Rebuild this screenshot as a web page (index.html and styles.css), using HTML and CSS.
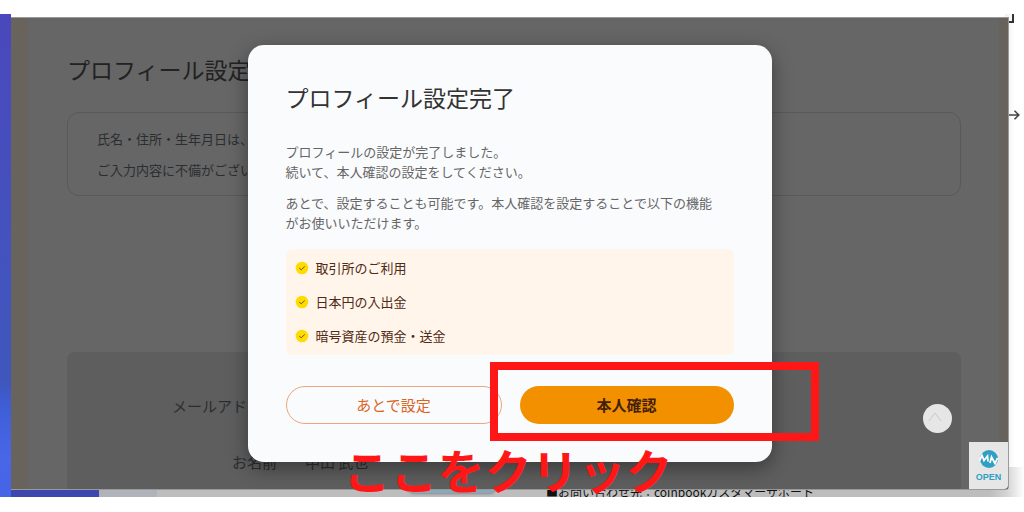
FILE: index.html
```html
<!DOCTYPE html>
<html lang="ja">
<head>
  <meta charset="UTF-8">
  <meta name="viewport" content="width=device-width, initial-scale=1.0">
  <title>プロフィール設定</title>
  <link rel="stylesheet" href="styles.css">
</head>
<body>
  <div class="desktop">
    <!-- window behind -->
    <div class="back-window">
      <div class="back-sidebar"></div>
      <div class="back-content">
        <span class="back-button"></span>
        <p class="contact">■お問い合わせ先：coinbookカスタマーサポート</p>
      </div>
      <svg class="edge-corner" width="6" height="10" viewBox="0 0 6 10"><path d="M0 8H4V0" fill="none" stroke="#333" stroke-width="2"/></svg>
      <svg class="edge-arrow" width="11" height="10" viewBox="0 0 11 10"><path d="M0 5H10M5.500 0.800L9.800 5L5.500 9.200" fill="none" stroke="#444" stroke-width="1.600"/></svg>
    </div>

    <div class="window">
      <main class="page">
        <h1>プロフィール設定</h1>
        <div class="notice">
          <p>氏名・住所・生年月日は、</p>
          <p>ご入力内容に不備がござい</p>
        </div>
        <dl class="profile">
          <dt>メールアドレス</dt>
          <dd></dd>
          <dt>お名前</dt>
          <dd>中山 武也</dd>
        </dl>
      </main>

      <button class="to-top" type="button" aria-label="ページの先頭へ">
        <svg width="14" height="10" viewBox="0 0 14 10"><path d="M1 9L7 1L13 9" fill="none" stroke="#c9c9c9" stroke-width="1"/></svg>
      </button>
      <a class="open-badge" href="#">
        <svg width="20" height="18" viewBox="0 0 20 18">
          <ellipse cx="10" cy="9" rx="9" ry="9" fill="#2f9fc4"/>
          <path d="M0.500 10.500L3 5.500L5 10.500L8.500 6L9 11.500M11 13L12.500 7L16 13.500L18.500 8" fill="none" stroke="#fff" stroke-width="1.800"/>
        </svg>
        <span>OPEN</span>
      </a>

      <div class="overlay">
        <div class="modal" role="dialog" aria-labelledby="modal-title">
          <h2 id="modal-title">プロフィール設定完了</h2>
          <p>プロフィールの設定が完了しました。<br>続いて、本人確認の設定をしてください。</p>
          <p>あとで、設定することも可能です。本人確認を設定することで以下の機能<br>がお使いいただけます。</p>
          <ul class="features">
            <li><svg class="check" viewBox="0 0 14 14"><circle cx="7" cy="7" r="6.300" fill="#ffdc00"/><path d="M4.200 7L6.200 8.800L9.800 5.400" fill="none" stroke="#6b5a10" stroke-width="1"/></svg>取引所のご利用</li>
            <li><svg class="check" viewBox="0 0 14 14"><circle cx="7" cy="7" r="6.300" fill="#ffdc00"/><path d="M4.200 7L6.200 8.800L9.800 5.400" fill="none" stroke="#6b5a10" stroke-width="1"/></svg>日本円の入出金</li>
            <li><svg class="check" viewBox="0 0 14 14"><circle cx="7" cy="7" r="6.300" fill="#ffdc00"/><path d="M4.200 7L6.200 8.800L9.800 5.400" fill="none" stroke="#6b5a10" stroke-width="1"/></svg>暗号資産の預金・送金</li>
          </ul>
          <div class="actions">
            <button class="btn btn-later" type="button">あとで設定</button>
            <button class="btn btn-verify" type="button">本人確認</button>
          </div>
          <div class="callout-box"></div>
          <div class="callout-text">ここをクリック</div>
        </div>
      </div>
    </div>
  </div>
</body>
</html>
```

FILE: styles.css
```css
* {
  box-sizing: border-box;
}
body {
  margin: 0;
  padding: 14px 0 15px;
  height: 100vh;
  background: #fff;
  font-family: "Noto Sans CJK JP", sans-serif;
  font-size: 13px;
  overflow: hidden;
}
h1, h2, p, ul, dl, dd {
  margin: 0;
  padding: 0;
}
.desktop {
  position: relative;
  height: 100%;
  padding: 3px 15px 7px 11px;
  background: linear-gradient(#4a48bc 0%, #4452bd 45%, #3f57bd 76%, #3f5fd8 82%, #4a66e8 92%, #4564e6 100%);
}
.desktop::before {
  content: "";
  position: absolute;
  left: 11px;
  bottom: 0;
  width: 88px;
  height: 7px;
  background: #3c48ae;
}
.desktop::after {
  content: "";
  position: absolute;
  top: 0;
  left: 11px;
  width: 88px;
  height: 3px;
  background: #fff;
}

/* window behind */
.back-window {
  position: absolute;
  top: 0;
  right: 0;
  bottom: 0;
  left: 99px;
  display: flex;
  align-items: flex-end;
  overflow: hidden;
  background: linear-gradient(to right, #fff 98%, #f0f0f0 98%, #fff 99%);
}
.back-sidebar {
  width: 58px;
  height: 30px;
  background: #b0b3b9;
}
.back-content {
  position: relative;
  flex: 1;
  height: 30px;
  background: linear-gradient(to right, #bdbdbd 96%, #d4d4d4 98%, #fff 100%);
}
.back-button {
  position: absolute;
  left: 250px;
  bottom: 4px;
  width: 90px;
  height: 20px;
  border-radius: 8px;
  background: #86a9bd;
  box-shadow: 0 1px 3px #888;
}
.contact {
  position: absolute;
  left: 389px;
  bottom: -4px;
  font-size: 12px;
  line-height: 18px;
  white-space: nowrap;
  color: #111;
}
.edge-corner {
  position: absolute;
  top: 0;
  right: 9px;
}
.edge-arrow {
  position: absolute;
  top: 96px;
  right: 4px;
}

/* front window */
.window {
  position: relative;
  height: 100%;
  border: 1px solid #999;
  border-left: 0;
  border-radius: 0 0 4px 0;
  background: #666;
}
.page {
  height: 100%;
  padding: 35px 38px 0 39px;
  border-left: 17px solid #68645d;
  border-right: 9px solid #68625d;
  overflow: hidden;
  color: #2b2e31;
}
h1 {
  font-size: 23px;
  font-weight: 400;
  line-height: 32px;
  color: #222;
}
.notice {
  margin-top: 27px;
  padding: 10px 29px;
  border: 1px solid #595959;
  border-radius: 12px;
  line-height: 31px;
}
.profile {
  display: grid;
  grid-template-columns: 210px 1fr;
  column-gap: 28px;
  margin-top: 156px;
  padding: 26px 0;
  border-radius: 8px;
  background: #5e5e5e;
  font-size: 15px;
  line-height: 56px;
}
.profile dt {
  text-align: right;
}
.to-top {
  position: absolute;
  right: 56px;
  bottom: 56px;
  width: 29px;
  height: 29px;
  padding: 0 5px 2px 0;
  border: 0;
  border-radius: 50%;
  background: #e6e6e6;
}
.open-badge {
  position: absolute;
  right: 0;
  bottom: 0;
  width: 39px;
  height: 47px;
  padding-top: 8px;
  border-radius: 0 0 4px 0;
  background: #e6e6e6;
  color: #2f9fc4;
  font-family: "Liberation Sans Narrow", "Liberation Sans", sans-serif;
  font-size: 9px;
  font-weight: 700;
  line-height: 18px;
  text-align: center;
  text-decoration: none;
}
.open-badge svg, .open-badge span {
  display: block;
  margin: 0 auto;
}

/* modal */
.overlay {
  position: absolute;
  inset: 0;
  display: flex;
  align-items: center;
  justify-content: center;
}
.modal {
  position: relative;
  width: 524px;
  padding: 36px 38px 38px;
  border-radius: 16px;
  background: #fafbfd;
  box-shadow: 0 6px 20px rgba(0, 0, 0, 0.4);
  color: #666;
  line-height: 20px;
}
.modal h2 {
  margin-bottom: 29px;
  font-size: 23px;
  font-weight: 400;
  line-height: 32px;
  color: #333;
}
.modal p {
  margin-bottom: 11px;
  white-space: nowrap;
}
.features {
  margin-top: 16px;
  padding: 2px 9px;
  border-radius: 6px;
  background: #fff5ea;
  list-style: none;
  color: #4f2a14;
  line-height: 34px;
}
.features li {
  display: flex;
  align-items: center;
  gap: 7px;
}
.check {
  width: 14px;
  height: 14px;
}
.actions {
  display: flex;
  gap: 18px;
  margin-top: 31px;
}
.btn {
  flex: 1;
  height: 38px;
  padding: 0 0 2px;
  border: 0;
  border-radius: 19px;
  font-family: inherit;
  font-size: 15px;
  cursor: pointer;
}
.btn-later {
  border: 1px solid #eaa67c;
  background: transparent;
  color: #d9651f;
}
.btn-verify {
  background: #f29000;
  color: #42200a;
  font-weight: 700;
}

/* annotation */
.callout-box {
  position: absolute;
  right: -47px;
  bottom: 21px;
  width: 329px;
  height: 79px;
  border: 8px solid #ff1717;
}
.callout-text {
  position: absolute;
  left: 96px;
  bottom: -34px;
  font-size: 47px;
  font-weight: 700;
  line-height: 54px;
  white-space: nowrap;
  color: #ff1717;
}
```
